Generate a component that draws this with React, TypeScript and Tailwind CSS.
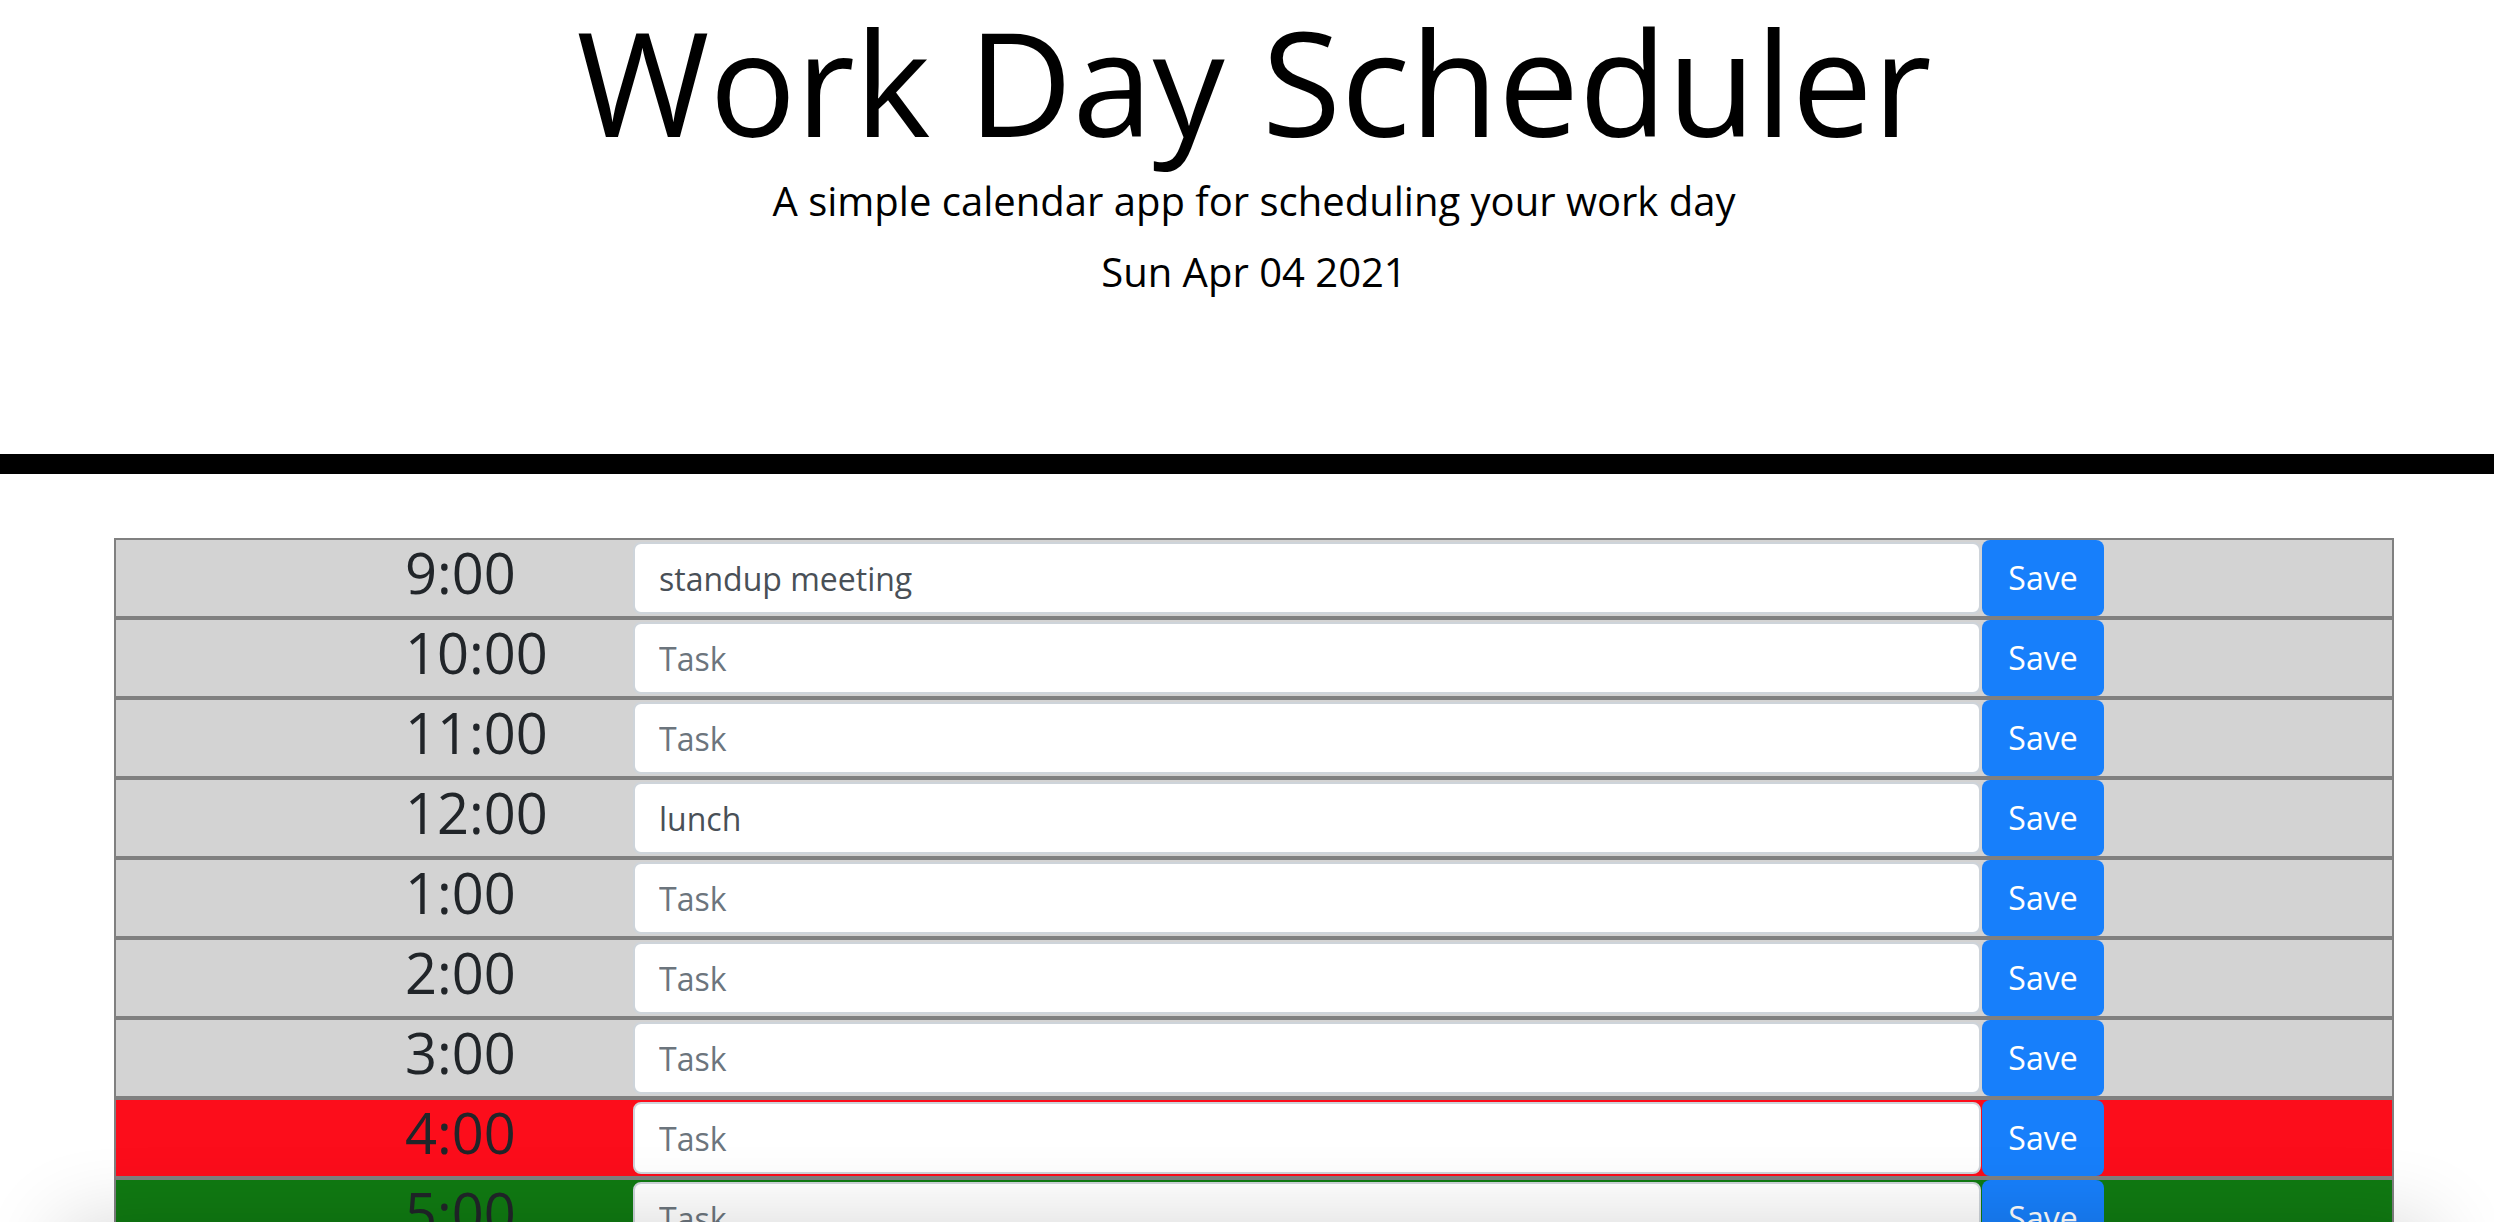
const hours = [
  { label: "9:00", task: "standup meeting", state: "past" },
  { label: "10:00", task: "", state: "past" },
  { label: "11:00", task: "", state: "past" },
  { label: "12:00", task: "lunch", state: "past" },
  { label: "1:00", task: "", state: "past" },
  { label: "2:00", task: "", state: "past" },
  { label: "3:00", task: "", state: "past" },
  { label: "4:00", task: "", state: "present" },
  { label: "5:00", task: "", state: "future" },
];

const stateBg: Record<string, string> = {
  past: "bg-[#d3d3d3]",
  present: "bg-[#fc0d1b]",
  future: "bg-[#107a12]",
};

function HourRow({ label, task, state }: { label: string; task: string; state: string }) {
  return (
    <div className={`flex h-[80px] border-2 border-[#808080] ${stateBg[state]}`}>
      <div className="w-[517px] shrink-0 pl-[289px] pt-[4px] text-[56px] leading-[56px] text-[#212529]">
        {label}
      </div>
      <input
        className="h-[72px] w-[1348px] shrink-0 self-center rounded-lg border-2 border-[#ced4da] bg-white px-[24px] text-[32px] text-[#495057] outline-none placeholder:text-[#6c757d]"
        placeholder="Task"
        defaultValue={task}
      />
      <button className="ml-[1px] flex w-[122px] shrink-0 items-center justify-center rounded-lg bg-[#177ffb] text-[32px] leading-none text-white">
        Save
      </button>
    </div>
  );
}

export default function App() {
  return (
    <div className="relative min-h-screen bg-white font-['Open_Sans',sans-serif] text-black">
      <header className="border-b-[20px] border-black pb-[162px] pl-[14px] pt-[9px] text-center">
        <h1 className="text-[144px] font-normal leading-[144px]">Work Day Scheduler</h1>
        <p className="mt-[28px] text-[40px] leading-[40px]">A simple calendar app for scheduling your work day</p>
        <p className="mt-[31px] text-[40px] leading-[40px]">Sun Apr 04 2021</p>
      </header>

      <div className="ml-[114px] mt-[64px] w-[2280px]">
        {hours.map((h) => (
          <HourRow key={h.label} {...h} />
        ))}
      </div>

      {/* shadow from something just under the fold */}
      <div className="pointer-events-none fixed left-[60px] right-[60px] top-full h-[100px] shadow-[0_0_80px_0_rgba(0,0,0,0.16)]" />
    </div>
  );
}
